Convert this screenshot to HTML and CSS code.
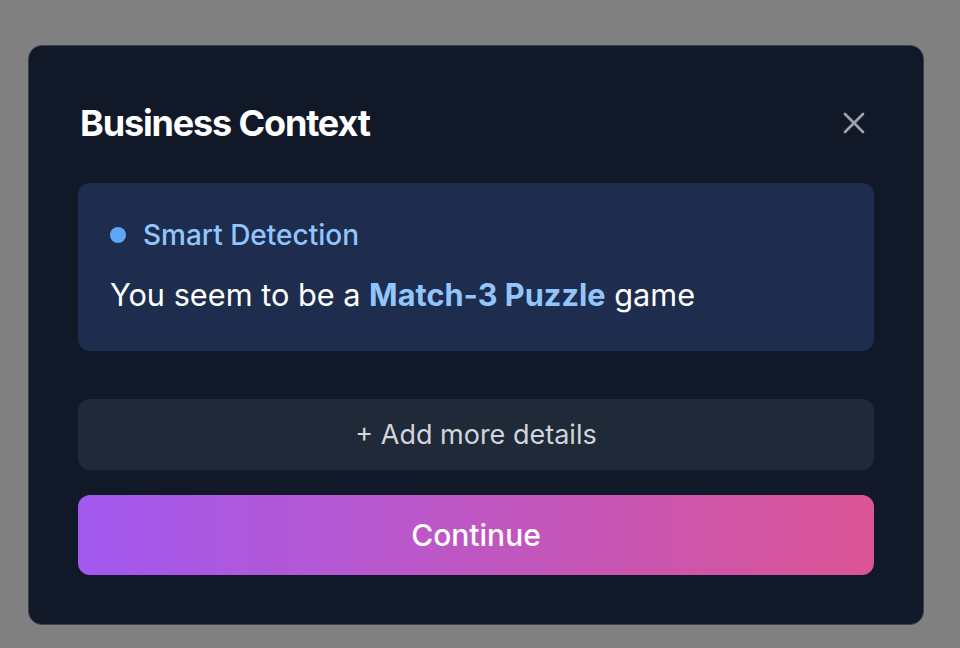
FILE: index.html
```html
<!DOCTYPE html>
<html lang="en">
<head>
<meta charset="utf-8">
<title>Business Context</title>
<link rel="stylesheet" href="styles.css">
</head>
<body>
<div class="overlay">
  <div class="modal">
    <div class="header">
      <h2 class="title">Business Context</h2>
      <button class="close" aria-label="Close">
        <svg width="36" height="36" viewBox="0 0 24 24" fill="none" stroke="currentColor" stroke-width="1.8" stroke-linecap="round"><path d="M6 6l12 12M18 6L6 18"/></svg>
      </button>
    </div>
    <div class="detect">
      <div class="detect-head"><span class="dot"></span><span class="detect-label">Smart Detection</span></div>
      <p class="detect-text">You seem to be a <strong>Match-3 Puzzle</strong> game</p>
    </div>
    <button class="details">+ Add more details</button>
    <button class="continue">Continue</button>
  </div>
</div>
</body>
</html>
```
FILE: styles.css
```css
* { box-sizing: border-box; }
html, body { margin: 0; height: 100%; }
body {
  background: #808080;
  font-family: Inter, "Noto Sans", sans-serif;
}
.overlay {
  height: 648px;
  padding: 45px 36px 0 28px;
}
.modal {
  width: 896px;
  height: 580px;
  background: #111827;
  border: 1px solid #374151;
  border-radius: 14px;
  padding: 49px;
  display: flex;
  flex-direction: column;
}
.header {
  display: flex;
  justify-content: space-between;
  align-items: center;
  height: 56px;
  flex-shrink: 0;
  margin-bottom: 32px;
}
.title {
  margin: 0 0 0 2px;
  font-size: 36px;
  font-weight: 700;
  color: #ffffff;
  letter-spacing: -1.15px;
}
.close {
  background: none;
  border: none;
  padding: 0;
  margin-right: 2px;
  color: #9ca3af;
  display: flex;
}
.detect {
  background: #1e2d4d;
  border-radius: 12px;
  height: 168px;
  flex-shrink: 0;
  padding: 36px 32px;
}
.detect-head {
  display: flex;
  align-items: center;
  gap: 17px;
  height: 32px;
}
.dot {
  width: 16px;
  height: 16px;
  border-radius: 50%;
  background: #60a5fa;
}
.detect-label {
  font-size: 28px;
  font-weight: 500;
  color: #93c5fd;
}
.detect-text {
  margin: 24px 0 0;
  font-size: 30.7px;
  color: #ffffff;
  line-height: 40px;
}
.detect-text strong {
  color: #93c5fd;
  font-weight: 700;
}
.details {
  margin-top: 48px;
  height: 71px;
  flex-shrink: 0;
  border: none;
  border-radius: 12px;
  background: #1f2937;
  color: #d1d5db;
  font-family: inherit;
  font-size: 27px;
}
.continue {
  margin-top: 25px;
  height: 80px;
  flex-shrink: 0;
  border: none;
  border-radius: 12px;
  background: linear-gradient(90deg, #a259f0, #db5495);
  color: #ffffff;
  font-family: inherit;
  font-size: 30px;
  font-weight: 500;
}
```
